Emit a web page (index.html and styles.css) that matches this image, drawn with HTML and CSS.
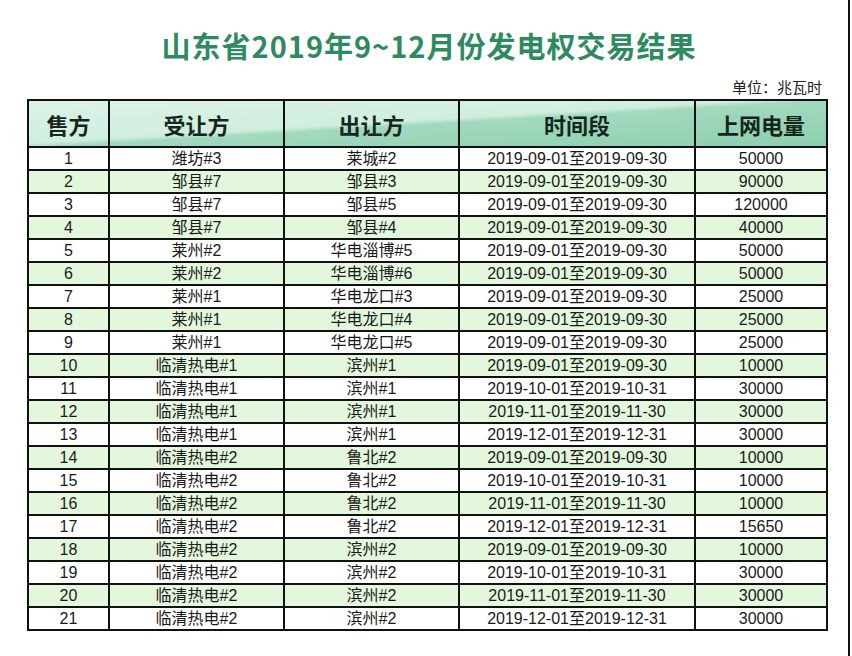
FILE: index.html
```html
<!DOCTYPE html>
<html lang="zh">
<head>
<meta charset="utf-8">
<title>山东省2019年9~12月份发电权交易结果</title>
<link rel="stylesheet" href="styles.css">
</head>
<body>
<div class="page">
  <h1 class="title">山东省2019年9~12月份发电权交易结果</h1>
  <div class="unit">单位：兆瓦时</div>
  <table class="result">
    <colgroup>
      <col class="c1"><col class="c2"><col class="c3"><col class="c4"><col class="c5">
    </colgroup>
    <thead>
      <tr><th>售方</th><th>受让方</th><th>出让方</th><th>时间段</th><th>上网电量</th></tr>
    </thead>
    <tbody>
      <tr><td>1</td><td>潍坊#3</td><td>莱城#2</td><td>2019-09-01至2019-09-30</td><td>50000</td></tr>
      <tr><td>2</td><td>邹县#7</td><td>邹县#3</td><td>2019-09-01至2019-09-30</td><td>90000</td></tr>
      <tr><td>3</td><td>邹县#7</td><td>邹县#5</td><td>2019-09-01至2019-09-30</td><td>120000</td></tr>
      <tr><td>4</td><td>邹县#7</td><td>邹县#4</td><td>2019-09-01至2019-09-30</td><td>40000</td></tr>
      <tr><td>5</td><td>莱州#2</td><td>华电淄博#5</td><td>2019-09-01至2019-09-30</td><td>50000</td></tr>
      <tr><td>6</td><td>莱州#2</td><td>华电淄博#6</td><td>2019-09-01至2019-09-30</td><td>50000</td></tr>
      <tr><td>7</td><td>莱州#1</td><td>华电龙口#3</td><td>2019-09-01至2019-09-30</td><td>25000</td></tr>
      <tr><td>8</td><td>莱州#1</td><td>华电龙口#4</td><td>2019-09-01至2019-09-30</td><td>25000</td></tr>
      <tr><td>9</td><td>莱州#1</td><td>华电龙口#5</td><td>2019-09-01至2019-09-30</td><td>25000</td></tr>
      <tr><td>10</td><td>临清热电#1</td><td>滨州#1</td><td>2019-09-01至2019-09-30</td><td>10000</td></tr>
      <tr><td>11</td><td>临清热电#1</td><td>滨州#1</td><td>2019-10-01至2019-10-31</td><td>30000</td></tr>
      <tr><td>12</td><td>临清热电#1</td><td>滨州#1</td><td>2019-11-01至2019-11-30</td><td>30000</td></tr>
      <tr><td>13</td><td>临清热电#1</td><td>滨州#1</td><td>2019-12-01至2019-12-31</td><td>30000</td></tr>
      <tr><td>14</td><td>临清热电#2</td><td>鲁北#2</td><td>2019-09-01至2019-09-30</td><td>10000</td></tr>
      <tr><td>15</td><td>临清热电#2</td><td>鲁北#2</td><td>2019-10-01至2019-10-31</td><td>10000</td></tr>
      <tr><td>16</td><td>临清热电#2</td><td>鲁北#2</td><td>2019-11-01至2019-11-30</td><td>10000</td></tr>
      <tr><td>17</td><td>临清热电#2</td><td>鲁北#2</td><td>2019-12-01至2019-12-31</td><td>15650</td></tr>
      <tr><td>18</td><td>临清热电#2</td><td>滨州#2</td><td>2019-09-01至2019-09-30</td><td>10000</td></tr>
      <tr><td>19</td><td>临清热电#2</td><td>滨州#2</td><td>2019-10-01至2019-10-31</td><td>30000</td></tr>
      <tr><td>20</td><td>临清热电#2</td><td>滨州#2</td><td>2019-11-01至2019-11-30</td><td>30000</td></tr>
      <tr><td>21</td><td>临清热电#2</td><td>滨州#2</td><td>2019-12-01至2019-12-31</td><td>30000</td></tr>
    </tbody>
  </table>
</div>
</body>
</html>
```

FILE: styles.css
```css
html, body {
  margin: 0;
  padding: 0;
  background: #ffffff;
}
body {
  width: 852px;
  height: 656px;
  overflow: hidden;
  font-family: "Liberation Sans", "Noto Sans CJK SC", sans-serif;
  color: #1a1a1a;
}
.page {
  width: 850px;
  height: 656px;
  border-right: 2px solid #111111;
  padding-top: 25px;
  box-sizing: border-box;
}
.title {
  margin: 0;
  height: 40px;
  line-height: 40px;
  text-align: center;
  font-family: "Noto Sans CJK SC", "Liberation Sans", sans-serif;
  font-size: 29px;
  font-weight: 700;
  letter-spacing: 1px;
  color: #2e8a5f;
  padding-left: 10px;
}
.unit {
  margin-top: 12px;
  height: 20px;
  line-height: 20px;
  width: 822px;
  text-align: right;
  font-family: "Noto Sans CJK SC", sans-serif;
  font-size: 15px;
  color: #222222;
}
.result {
  margin-top: 2px;
  margin-left: 27px;
  width: 799px;
  border-collapse: collapse;
  table-layout: fixed;
  border: 2px solid #111111;
  background: linear-gradient(176.6deg, #dbf3e6 0%, #d0eedf 46%, #a2d9be 51%, #8ccfae 100%) top left / 100% 47px no-repeat;
}
.c1 { width: 81px; }
.c2 { width: 175px; }
.c3 { width: 175px; }
.c4 { width: 236px; }
.c5 { width: 132px; }
.result th {
  height: 45px;
  padding: 0;
  border: 2px solid #111111;
  font-family: "Noto Sans CJK SC", sans-serif;
  font-size: 22px;
  font-weight: 700;
  color: #15261d;
  text-align: center;
  vertical-align: middle;
}
.result td {
  height: 21px;
  line-height: 21px;
  padding: 0;
  border: 2px solid #111111;
  text-align: center;
  font-size: 16px;
  background: #ffffff;
  white-space: nowrap;
}
.result tbody tr:nth-child(even) td {
  background: #e3f7dd;
}
```
